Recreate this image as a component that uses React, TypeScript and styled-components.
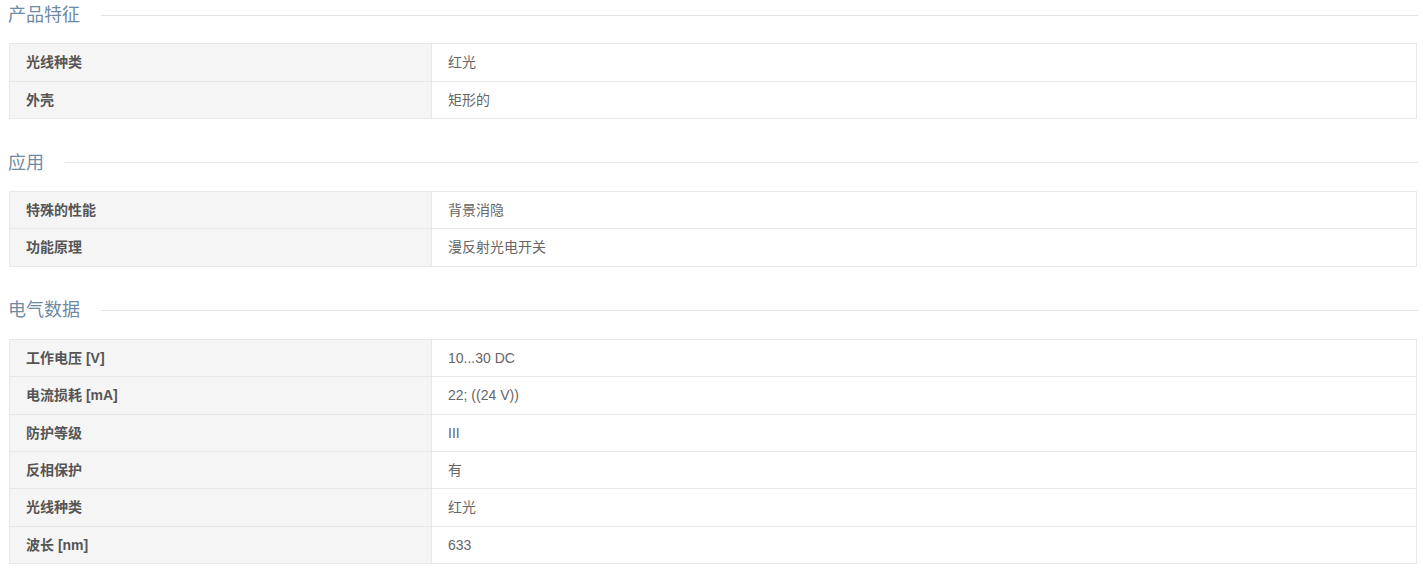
import React from "react";
import styled, { createGlobalStyle } from "styled-components";

const Global = createGlobalStyle`
  html, body { margin: 0; padding: 0; background: #fff; }
  body { font-family: "Liberation Sans", "Noto Sans CJK SC", sans-serif; }
`;

const Page = styled.div`
  width: 1408px;
  margin-left: 9px;
  display: flex;
  flex-direction: column;
  gap: 28.6px;
`;

const Section = styled.section`
  display: flex;
  flex-direction: column;
  gap: 13.3px;
`;

const Heading = styled.div`
  display: flex;
  align-items: center;
  height: 30px;
  margin-left: -1px;
  font-size: 18px;
  line-height: 30px;
  color: #6f8aa3;
  font-family: "Liberation Sans", "Noto Sans CJK SC", sans-serif;
  &::after {
    content: "";
    flex: 1;
    height: 1px;
    background: #e4e4e4;
    margin-left: 21px;
    margin-right: -1px;
  }
`;

const Table = styled.div`
  display: grid;
  grid-template-columns: 422px 1fr;
  border: 1px solid #e8e8e8;
  border-top: none;
  font-size: 14px;
`;

const Cell = styled.div<{ $label?: boolean }>`
  padding: 8px 16px;
  line-height: 20.4px;
  border-top: 1px solid #e8e8e8;
  background: ${(p) => (p.$label ? "#f5f5f5" : "#fff")};
  color: ${(p) => (p.$label ? "#555" : "#666")};
  font-weight: ${(p) => (p.$label ? 700 : 400)};
  border-right: ${(p) => (p.$label ? "1px solid #e8e8e8" : "none")};
`;

const data: { title: string; rows: [string, string][] }[] = [
  {
    title: "产品特征",
    rows: [
      ["光线种类", "红光"],
      ["外壳", "矩形的"],
    ],
  },
  {
    title: "应用",
    rows: [
      ["特殊的性能", "背景消隐"],
      ["功能原理", "漫反射光电开关"],
    ],
  },
  {
    title: "电气数据",
    rows: [
      ["工作电压 [V]", "10...30 DC"],
      ["电流损耗 [mA]", "22; ((24 V))"],
      ["防护等级", "III"],
      ["反相保护", "有"],
      ["光线种类", "红光"],
      ["波长 [nm]", "633"],
    ],
  },
];

export default function App() {
  return (
    <>
      <Global />
      <Page>
        {data.map((s) => (
          <Section key={s.title}>
            <Heading>{s.title}</Heading>
            <Table>
              {s.rows.map(([k, v], i) => (
                <React.Fragment key={i}>
                  <Cell $label>{k}</Cell>
                  <Cell>{v}</Cell>
                </React.Fragment>
              ))}
            </Table>
          </Section>
        ))}
      </Page>
    </>
  );
}
